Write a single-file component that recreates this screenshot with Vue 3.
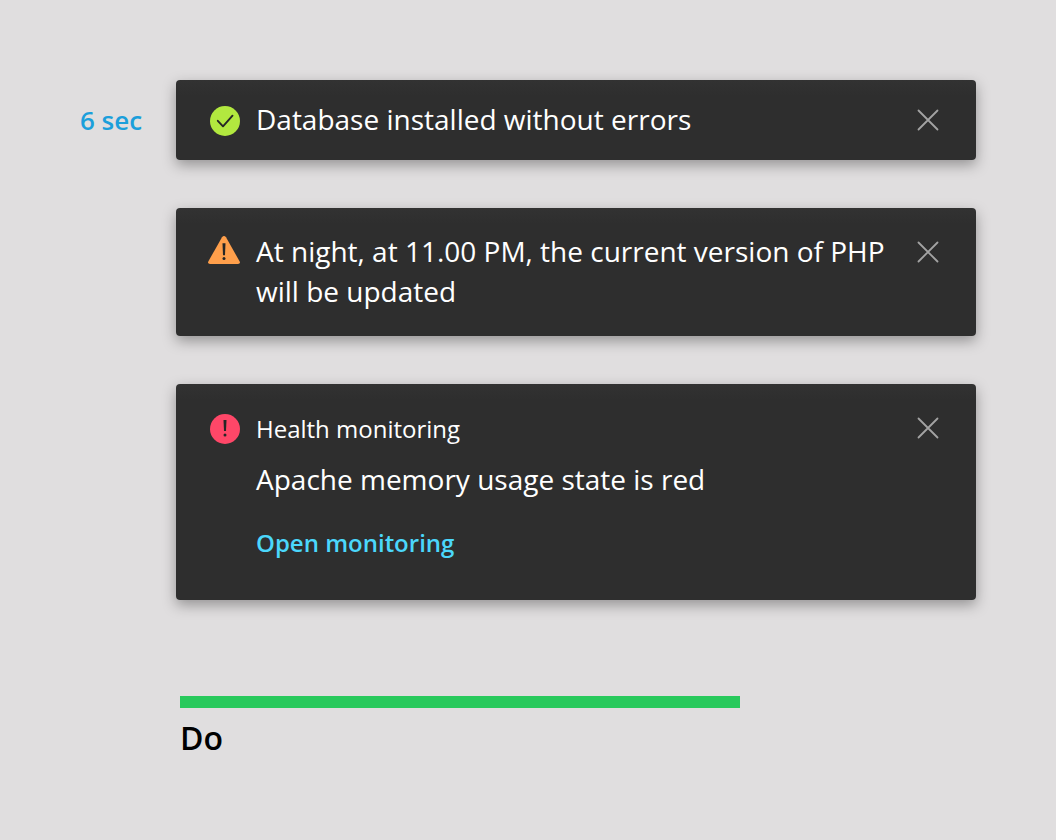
<script setup>
const notices = [
  { id: 1, kind: 'success', text: 'Database installed without errors', timer: '6 sec' },
  { id: 2, kind: 'warning', text: 'At night, at 11.00 PM, the current version of PHP will be updated' },
  { id: 3, kind: 'danger', title: 'Health monitoring', text: 'Apache memory usage state is red', action: 'Open monitoring' }
]
</script>

<template>
  <main class="page">
    <section class="list" aria-label="Notifications">
      <div v-for="n in notices" :key="n.id" class="row">
        <span class="timer">{{ n.timer }}</span>
        <article class="toast" :class="n.kind">
          <svg class="icon" viewBox="0 0 32 32" aria-hidden="true">
            <template v-if="n.kind === 'success'">
              <circle cx="17" cy="17" r="15" fill="#b2e83f" />
              <path d="M9.800 16.800l5.200 5.500L24.500 11.700" fill="none" stroke="#262626" stroke-width="1.900" stroke-linecap="round" stroke-linejoin="round" />
            </template>
            <template v-else-if="n.kind === 'warning'">
              <path d="M14 1.200Q16 -1.200 18 1.200L31.700 25.500Q32.600 28 30 28H2Q-.6 28 .3 25.500Z" fill="#ff9f4b" />
              <path d="M14.500 7.300h3l-.5 12h-2z" fill="#262626" />
              <circle cx="16" cy="22.600" r="1.500" fill="#262626" />
            </template>
            <template v-else>
              <circle cx="17" cy="17" r="15" fill="#ff4768" />
              <path d="M15.500 8h3l-.5 11h-2z" fill="#262626" />
              <circle cx="17" cy="23" r="1.500" fill="#262626" />
            </template>
          </svg>
          <div class="body">
            <h2 v-if="n.title" class="title">{{ n.title }}</h2>
            <p class="text">{{ n.text }}</p>
            <a v-if="n.action" class="action" href="#">{{ n.action }}</a>
          </div>
          <button class="close" type="button" aria-label="Close">
            <svg viewBox="0 0 24 24" aria-hidden="true"><path d="M2.500 2.500l19 19M21.500 2.500l-19 19" fill="none" stroke="#a3a3a3" stroke-width="1.800" stroke-linecap="round" /></svg>
          </button>
        </article>
      </div>
    </section>
    <section class="do">
      <div class="bar"></div>
      <h1 class="heading">Do</h1>
    </section>
  </main>
</template>

<style>
body { background: #e0dedf; }
</style>

<style scoped>
.page { padding: 80px; font-family: "Open Sans", sans-serif; }
.list { display: grid; gap: 48px; }
.row { display: grid; grid-template-columns: 96px minmax(0, 1fr); }
.timer { padding-top: 20px; font-size: 26px; line-height: 40px; font-weight: 600; color: #1b9fdb; }
.toast { display: flex; align-items: flex-start; padding: 23px 32px 25px; border-radius: 4px; background: linear-gradient(#323232, #2e2e2e 16px); color: #fff; box-shadow: 0 5px 14px rgba(0, 0, 0, .34); }
.success { padding-top: 19px; padding-bottom: 21px; }
.danger { padding-bottom: 37px; }
.icon { flex: none; width: 32px; height: 32px; margin-top: 5px; overflow: visible; }
.body { flex: 1; min-width: 0; padding-left: 16px; }
.title, .text, .heading { margin: 0; font-weight: 400; }
.title { font-size: 24px; line-height: 44px; margin-bottom: 8px; }
.text { font-size: 28px; line-height: 40px; }
.action { display: block; width: fit-content; margin-top: 24px; font-size: 24px; line-height: 40px; font-weight: 600; color: #4bd7fb; text-decoration: none; }
.close { flex: none; display: grid; place-items: center; width: 32px; height: 42px; margin-bottom: -2px; padding: 0; border: 0; background: none; cursor: pointer; }
.close svg { width: 24px; height: 24px; }
.do { margin: 96px 96px 0 100px; }
.bar { width: 80%; height: 12px; background: #28c95c; }
.heading { margin-top: 8px; font-size: 32px; line-height: 44px; font-weight: 600; color: #000; }
</style>
